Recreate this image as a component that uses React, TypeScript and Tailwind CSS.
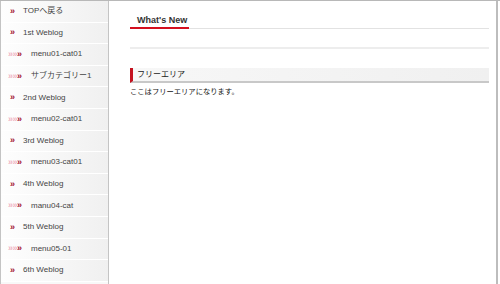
import React from "react";

const items: { label: string; sub?: boolean }[] = [
  { label: "TOPへ戻る" },
  { label: "1st Weblog" },
  { label: "menu01-cat01", sub: true },
  { label: "サブカテゴリー1", sub: true },
  { label: "2nd Weblog" },
  { label: "menu02-cat01", sub: true },
  { label: "3rd Weblog" },
  { label: "menu03-cat01", sub: true },
  { label: "4th Weblog" },
  { label: "manu04-cat", sub: true },
  { label: "5th Weblog" },
  { label: "menu05-01", sub: true },
  { label: "6th Weblog" },
];

function Bullet({ sub }: { sub?: boolean }) {
  return (
    <span className="flex items-center text-[9px] font-bold leading-none tracking-[-0.5px]">
      {sub && <span className="text-[#f0b4c2]">»»</span>}
      <span className="text-[#a3122f]">»</span>
    </span>
  );
}

export default function App() {
  return (
    <div
      className="flex h-[284px] w-[500px] overflow-hidden border-t border-[#b8b8b8] bg-white pr-[2px]"
      style={{ fontFamily: '"Liberation Sans", Arial, "Noto Sans CJK JP", sans-serif' }}
    >
      {/* サイドメニュー */}
      <nav className="w-[109px] shrink-0 border-l border-r border-[#c4c4c4] bg-[#f8f8f8]">
        {items.map((it) => (
          <div
            key={it.label}
            className="flex h-[21.6px] items-center border-b border-white bg-gradient-to-r from-[#fefefe] to-[#f0f0f0]"
          >
            <span className={it.sub ? "w-[30px] pl-[7px]" : "w-[22px] pl-[9px]"}>
              <Bullet sub={it.sub} />
            </span>
            <span className="whitespace-nowrap text-[8px] text-[#444]">{it.label}</span>
          </div>
        ))}
      </nav>

      {/* メイン */}
      <main className="flex-1 border-r-[2px] border-[#bdbdbd] pl-[21px] pr-[7px] pt-[14px]">
        <div className="flex border-b border-[#e2e2e2]">
          <h2 className="-mb-[1px] border-b-2 border-[#d40f1e] pb-[2px] pl-[7px] pr-[2px] text-[9px] font-bold leading-[10px] text-[#333]">
            What's New
          </h2>
        </div>
        <div className="mt-[18px] h-[2px] bg-[#ededed]" />

        <h3 className="mt-[19px] flex h-[15px] items-center border-b-2 border-l-[3px] border-b-[#c8c8c8] border-l-[#c4121f] bg-gradient-to-r from-[#f7f7f7] to-[#f0f0f0] pl-[4px] text-[8px] text-[#222]">
          フリーエリア
        </h3>
        <p className="mt-[4px] text-[7.3px] leading-[10px] text-[#111]">ここはフリーエリアになります。</p>
      </main>
    </div>
  );
}
